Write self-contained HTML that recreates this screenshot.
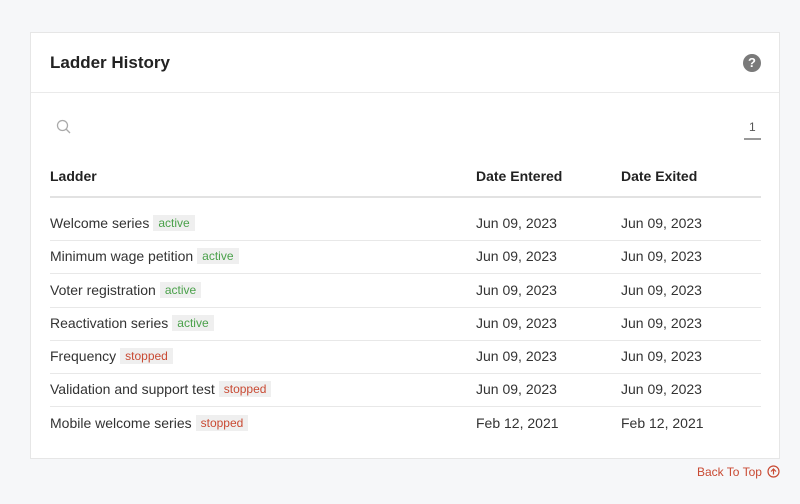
<!DOCTYPE html>
<html><head><style>
body{margin:0;width:800px;height:504px;background:#f6f7f9;font-family:"Liberation Sans",sans-serif;position:relative;overflow:hidden}
.card{position:absolute;left:30px;top:32px;width:748px;height:425px;background:#fff;border:1px solid #e6e6e6}
.title{position:absolute;left:19px;top:20px;font-size:17px;font-weight:bold;color:#222}
.hl{position:absolute;left:0;right:0;top:59px;border-top:1px solid #eaeaea}
.help{position:absolute;left:712px;top:21px;width:18px;height:18px;border-radius:50%;background:#7a7a7a;color:#fff;font-size:13px;font-weight:bold;text-align:center;line-height:18px}
.pg{position:absolute;left:718px;top:87px;font-size:12px;color:#555}
.pgl{position:absolute;left:713px;top:105px;width:17px;height:2px;background:#999}
.th{position:absolute;top:135px;font-size:14px;font-weight:bold;color:#222}
.thl{position:absolute;left:19px;width:711px;top:163px;border-top:2px solid #e2e2e2}
.row{position:absolute;left:19px;width:711px;height:33px;border-bottom:1px solid #e8e8e8;font-size:14px;color:#333}
.row span{position:absolute;top:8px}
.b{display:inline-block;font-size:12px;padding:1px 5px;background:#efefef;margin-left:4px;position:relative;top:-1px}
.a{color:#4aa14a}.s{color:#c94a33}
.btt{position:absolute;left:697px;top:465px;font-size:12px;color:#c94a33}
</style></head><body>
<div class="card">
<div class="title">Ladder History</div>
<div class="help">?</div>
<div class="hl"></div>
<svg style="position:absolute;left:25px;top:86px" width="16" height="16" viewBox="0 0 16 16"><circle cx="6.5" cy="6.5" r="5" fill="none" stroke="#aaa" stroke-width="1.3"/><line x1="10" y1="10" x2="14" y2="14" stroke="#aaa" stroke-width="1.3"/></svg>
<div class="pg">1</div><div class="pgl"></div>
<div class="th" style="left:19px">Ladder</div>
<div class="th" style="left:445px">Date Entered</div>
<div class="th" style="left:590px">Date Exited</div>
<div class="thl"></div>
<div class="row" style="top:174px"><span style="left:0">Welcome series<b class="b a" style="font-weight:normal">active</b></span><span style="left:426px">Jun 09, 2023</span><span style="left:571px">Jun 09, 2023</span></div>
<div class="row" style="top:207px"><span style="left:0">Minimum wage petition<b class="b a" style="font-weight:normal">active</b></span><span style="left:426px">Jun 09, 2023</span><span style="left:571px">Jun 09, 2023</span></div>
<div class="row" style="top:241px"><span style="left:0">Voter registration<b class="b a" style="font-weight:normal">active</b></span><span style="left:426px">Jun 09, 2023</span><span style="left:571px">Jun 09, 2023</span></div>
<div class="row" style="top:274px"><span style="left:0">Reactivation series<b class="b a" style="font-weight:normal">active</b></span><span style="left:426px">Jun 09, 2023</span><span style="left:571px">Jun 09, 2023</span></div>
<div class="row" style="top:307px"><span style="left:0">Frequency<b class="b s" style="font-weight:normal">stopped</b></span><span style="left:426px">Jun 09, 2023</span><span style="left:571px">Jun 09, 2023</span></div>
<div class="row" style="top:340px"><span style="left:0">Validation and support test<b class="b s" style="font-weight:normal">stopped</b></span><span style="left:426px">Jun 09, 2023</span><span style="left:571px">Jun 09, 2023</span></div>
<div class="row" style="top:374px;border-bottom:none"><span style="left:0">Mobile welcome series<b class="b s" style="font-weight:normal">stopped</b></span><span style="left:426px">Feb 12, 2021</span><span style="left:571px">Feb 12, 2021</span></div>
</div>
<div class="btt">Back To Top</div>
<svg style="position:absolute;left:767px;top:465px" width="13" height="13" viewBox="0 0 13 13"><circle cx="6.5" cy="6.5" r="5.5" fill="none" stroke="#c94a33" stroke-width="1.2"/><path d="M6.5 9.5V4M4 6.5l2.5-2.5 2.5 2.5" fill="none" stroke="#c94a33" stroke-width="1.2"/></svg>
</body></html>
